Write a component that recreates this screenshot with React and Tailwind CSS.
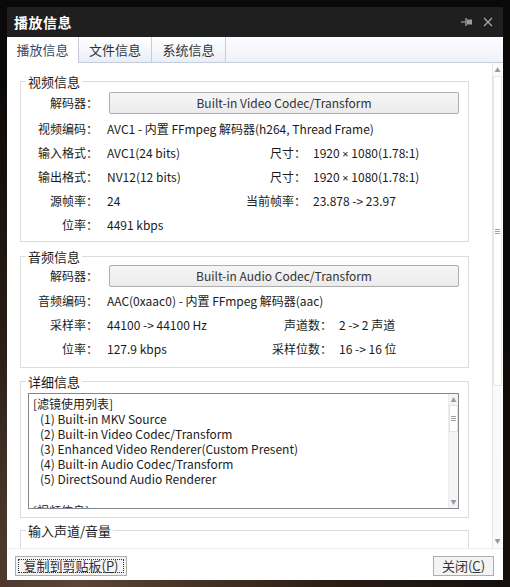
import React from 'react';

const Pin = () => (
  <svg width="12" height="10" viewBox="0 0 12 10" className="text-[#9c9c9c]">
    <path d="M0 5h5" stroke="currentColor" strokeWidth="1.2" />
    <path d="M5 1v8" stroke="currentColor" strokeWidth="1.4" />
    <rect x="6" y="2.5" width="5" height="5" fill="currentColor" />
  </svg>
);

const Close = () => (
  <svg width="10" height="10" viewBox="0 0 10 10" className="text-[#a8a8a8]">
    <path d="M1 1l8 8M9 1l-8 8" stroke="currentColor" strokeWidth="1.2" />
  </svg>
);

const Up = () => <span className="text-[6px] leading-none text-[#9a9a9a]">▲</span>;
const Down = () => <span className="text-[6px] leading-none text-[#9a9a9a]">▼</span>;

const Grip = () => (
  <div className="flex flex-col gap-[1px]">
    <div className="w-[5px] h-px bg-[#a0a0a0]" />
    <div className="w-[5px] h-px bg-[#a0a0a0]" />
    <div className="w-[5px] h-px bg-[#a0a0a0]" />
  </div>
);

const Size = () => (
  <>
    1920 <span className="font-['Noto_Sans',sans-serif] text-[11px]">×</span> 1080(1.78:1)
  </>
);

const Row = ({ label, value, rlabel, rvalue, lw, h = 'h-[24px]' }) => (
  <div className={`flex items-center ${h}`}>
    <div className="w-[77px] text-right">{label}</div>
    <div className={`ml-[9px] whitespace-nowrap ${rlabel ? lw : ''}`}>{value}</div>
    {rlabel && <div className="w-[80px] text-right">{rlabel}</div>}
    {rlabel && <div className="ml-[7px] whitespace-nowrap">{rvalue}</div>}
  </div>
);

const CodecButton = ({ label, text }) => (
  <div className="flex items-center">
    <div className="w-[77px] text-right">{label}</div>
    <div className="ml-[11px] w-[350px] h-[22px] flex items-center justify-center border border-[#adadad] rounded-[2px] bg-gradient-to-b from-[#f6f6f6] to-[#ebebeb] text-[#333]">
      {text}
    </div>
  </div>
);

const Legend = ({ children }) => (
  <legend className="ml-[5px] px-[2px] text-[13px] leading-[17px] text-[#1b1b1b]">{children}</legend>
);

export default function App() {
  return (
    <div className="w-[510px] h-[587px] overflow-hidden pl-[7px] pt-[7px] bg-[radial-gradient(circle_at_15%_100%,#5b4535_0%,#2a1e16_35%,#0b0908_70%)] font-['Noto_Sans_CJK_SC',sans-serif] text-[12px] text-[#1b1b1b]">
      <div className="w-[496px] h-[573px] flex flex-col bg-white">
        {/* title bar */}
        <div className="h-[30px] shrink-0 flex items-center bg-[#1f1f1f] pl-[7px] pr-[10px]">
          <span className="text-white text-[14px] font-bold tracking-[0.5px]">播放信息</span>
          <div className="ml-auto flex items-center gap-[10px]">
            <Pin />
            <Close />
          </div>
        </div>

        {/* tabs */}
        <div className="h-[26px] shrink-0 flex bg-gradient-to-b from-[#fbfcfe] to-[#eef2f9] border-b border-[#c5cddb]">
          <div className="w-[72px] -mb-px bg-white border-r border-[#c5cddb] flex items-center justify-center text-[13px] text-[#3c4a68]">播放信息</div>
          <div className="w-[73px] bg-gradient-to-b from-white to-[#e9eef7] border-r border-[#c5cddb] flex items-center justify-center text-[13px] text-[#333]">文件信息</div>
          <div className="w-[74px] bg-gradient-to-b from-white to-[#e9eef7] border-r border-[#c5cddb] flex items-center justify-center text-[13px] text-[#333]">系统信息</div>
        </div>

        {/* content + scrollbar */}
        <div className="flex-1 flex min-h-0">
          <div className="flex-1 overflow-hidden pl-[13px]">
            <fieldset className="mt-[10px] w-[449px] border border-[#dcdcdc] pt-[2px] pb-[4px]">
              <Legend>视频信息</Legend>
              <CodecButton label="解码器：" text="Built-in Video Codec/Transform" />
              <div className="mt-[3px]">
                <Row label="视频编码：" value="AVC1 - 内置 FFmpeg 解码器(h264, Thread Frame)" />
                <Row label="输入格式：" value="AVC1(24 bits)" rlabel="尺寸：" rvalue={<Size />} lw="w-[119px]" />
                <Row label="输出格式：" value="NV12(12 bits)" rlabel="尺寸：" rvalue={<Size />} lw="w-[119px]" />
                <Row label="源帧率：" value="24" rlabel="当前帧率：" rvalue="23.878 -> 23.97" lw="w-[119px]" />
                <Row label="位率：" value="4491 kbps" />
              </div>
            </fieldset>

            <fieldset className="mt-[6px] w-[449px] border border-[#dcdcdc] pb-[6px]">
              <Legend>音频信息</Legend>
              <CodecButton label="解码器：" text="Built-in Audio Codec/Transform" />
              <div className="mt-[2px]">
                <Row label="音频编码：" value="AAC(0xaac0) - 内置 FFmpeg 解码器(aac)" />
                <Row label="采样率：" value="44100 -> 44100 Hz" rlabel="声道数：" rvalue="2 -> 2 声道" lw="w-[145px]" />
                <Row label="位率：" value="127.9 kbps" rlabel="采样位数：" rvalue="16 -> 16 位" lw="w-[145px]" />
              </div>
            </fieldset>

            <fieldset className="mt-[5px] w-[449px] border border-[#dcdcdc] pb-[8px]">
              <Legend>详细信息</Legend>
              <div className="mt-[3px] ml-[7px] w-[431px] h-[116px] flex border border-[#828790] bg-white">
                <div className="flex-1 overflow-hidden pl-[4px] pt-[2px] leading-[15px] whitespace-nowrap">
                  <div>[滤镜使用列表]</div>
                  <div className="pl-[7px]">(1) Built-in MKV Source</div>
                  <div className="pl-[7px]">(2) Built-in Video Codec/Transform</div>
                  <div className="pl-[7px]">(3) Enhanced Video Renderer(Custom Present)</div>
                  <div className="pl-[7px]">(4) Built-in Audio Codec/Transform</div>
                  <div className="pl-[7px]">(5) DirectSound Audio Renderer</div>
                  <div>&nbsp;</div>
                  <div className="mt-[2px]">[视频信息]</div>
                </div>
                <div className="w-[10px] flex flex-col items-center bg-[#f5f5f5] border-l border-[#ececec] py-[3px]">
                  <Up />
                  <div className="mt-[2px] w-[9px] h-[27px] bg-white border border-[#e2e2e2] flex items-center justify-center">
                    <Grip />
                  </div>
                  <div className="flex-1" />
                  <Down />
                </div>
              </div>
            </fieldset>

            <fieldset className="mt-[4px] w-[449px] h-[40px] border border-[#dcdcdc]">
              <Legend>输入声道/音量</Legend>
            </fieldset>
          </div>

          <div className="w-[10px] mr-px flex flex-col items-center bg-[#fafafa] border-l border-[#e6e6e6] py-[4px]">
            <Up />
            <div className="mt-[3px] w-[9px] h-[310px] bg-white border border-[#e6e6e6] flex items-center justify-center">
              <Grip />
            </div>
            <div className="flex-1" />
            <Down />
          </div>
        </div>

        {/* bottom bar */}
        <div className="h-[32px] shrink-0 flex items-start pt-[7px] pl-[8px] pr-[9px] bg-white border-t border-[#ececec]">
          <div className="w-[112px] h-[20px] p-[2px] border border-[#adadad] bg-[#f4f4f4]">
            <div className="h-full flex items-center justify-center border border-dotted border-[#333] text-[13px] text-[#333]">
              复制到剪贴板(<span className="underline">P</span>)
            </div>
          </div>
          <div className="ml-auto w-[61px] h-[20px] flex items-center justify-center border border-[#adadad] bg-[#f4f4f4] text-[13px] text-[#333]">
            关闭(<span className="underline">C</span>)
          </div>
        </div>
      </div>
    </div>
  );
}
